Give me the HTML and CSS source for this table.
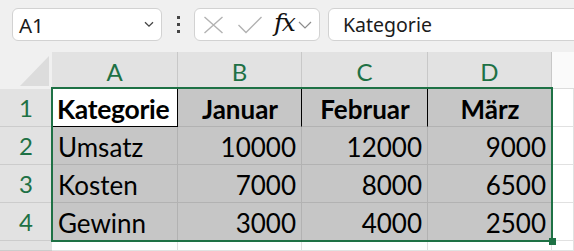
FILE: index.html
```html
<!DOCTYPE html>
<html lang="de">
<head>
    <meta charset="UTF-8">
    <title>Mappe1 - Excel</title>
    <link rel="stylesheet" href="styles.css">
</head>
<body>
    <div class="toolbar">
        <div class="namebox">
            <span>A1</span>
            <svg class="chev" width="10" height="7" viewBox="0 0 10 7"><path d="M1 1.2 L5 5.2 L9 1.2" fill="none" stroke="#444" stroke-width="1.3"/></svg>
        </div>
        <div class="dots"><i></i><i></i><i></i></div>
        <div class="funcbox">
            <svg class="icon" width="22" height="18" viewBox="0 0 22 18"><path d="M1.5 1 L19.5 17 M19.5 1 L1.5 17" stroke="#b2b2b2" stroke-width="1.4" fill="none"/></svg>
            <svg class="icon" width="26" height="18" viewBox="0 0 26 18"><path d="M1.5 9 L9 16.5 L24.5 1" stroke="#b2b2b2" stroke-width="1.4" fill="none"/></svg>
            <span class="fx">fx</span>
            <svg class="chev small" width="14" height="8" viewBox="0 0 14 8"><path d="M1 1 L7 7 L13 1" fill="none" stroke="#8c8c8c" stroke-width="1.2"/></svg>
        </div>
        <div class="formula">Kategorie</div>
    </div>

    <div class="sheet">
        <!-- column headers -->
        <div class="corner"><div class="tri"></div></div>
        <div class="hd">A</div>
        <div class="hd">B</div>
        <div class="hd">C</div>
        <div class="hd">D</div>
        <div class="hd empty"></div>

        <div class="rh">1</div>
        <div class="c act">Kategorie</div>
        <div class="c sel b-mid thick">Januar</div>
        <div class="c sel b-mid thick">Februar</div>
        <div class="c sel b-mid">März</div>
        <div class="c"></div>

        <div class="rh">2</div>
        <div class="c sel">Umsatz</div>
        <div class="c sel num">10000</div>
        <div class="c sel num">12000</div>
        <div class="c sel num">9000</div>
        <div class="c"></div>

        <div class="rh">3</div>
        <div class="c sel">Kosten</div>
        <div class="c sel num">7000</div>
        <div class="c sel num">8000</div>
        <div class="c sel num">6500</div>
        <div class="c"></div>

        <div class="rh">4</div>
        <div class="c sel">Gewinn</div>
        <div class="c sel num">3000</div>
        <div class="c sel num">4000</div>
        <div class="c sel num">2500</div>
        <div class="c"></div>

        <div class="rh"></div>
        <div class="c"></div>
        <div class="c"></div>
        <div class="c"></div>
        <div class="c"></div>
        <div class="c"></div>

        <!-- selected range A1:D4 -->
        <div class="selection"></div>
        <div class="handle"></div>
    </div>
</body>
</html>
```

FILE: styles.css
```css
body {
    margin: 0;
    width: 574px;
    height: 251px;
    overflow: hidden;
    background: #ffffff;
    font-family: 'Lato', sans-serif;
}

/* Name box + formula bar */
.toolbar {
    height: 52px;
    box-sizing: border-box;
    padding: 8px 0 0 12px;
    background: #f0f0f0;
    display: flex;
    align-items: flex-start;
    overflow: hidden;
    font-family: 'Noto Sans', sans-serif;
}

.toolbar > * {
    flex-shrink: 0;
}

.namebox,
.funcbox,
.formula {
    height: 33px;
    box-sizing: border-box;
    background: #ffffff;
    border: 1px solid #d2d2d2;
    border-radius: 6px;
    display: flex;
    align-items: center;
}

.namebox {
    width: 150px;
    padding: 0 7px 0 6px;
    justify-content: space-between;
    font-size: 20.5px;
    color: #1b1b1b;
}

.dots {
    width: 32px;
    display: flex;
    flex-direction: column;
    align-items: center;
    gap: 4px;
    padding-top: 8px;
}

.dots i {
    width: 3px;
    height: 3px;
    background: #444;
}

.funcbox {
    width: 126px;
    padding-left: 8px;
}

.funcbox .icon {
    margin-right: 12px;
}

.fx {
    font-family: 'DejaVu Serif', serif;
    font-style: italic;
    font-size: 25px;
    color: #111;
    margin: -4px 4px 0 -1px;
    letter-spacing: -1.5px;
}

.formula {
    width: 260px;
    margin-left: 8px;
    padding-left: 14px;
    font-size: 19.5px;
    color: #1b1b1b;
    border-radius: 6px 0 0 6px;
}

/* Grid */
.sheet {
    position: relative;
    display: grid;
    grid-template-columns: 52px 126px 124px 126px 124px 1fr;
    grid-template-rows: 37px 38px 38px 38px 38px 1fr;
    height: 199px;
}

.sheet > div {
    box-sizing: border-box;
}

.corner {
    background: #f0f0f0;
    position: relative;
}

.corner .tri {
    position: absolute;
    left: 20px;
    top: 4px;
    width: 0;
    height: 0;
    border-left: 29px solid transparent;
    border-bottom: 30px solid #dcdcdc;
}

.hd {
    background: #e2e2e2;
    border-right: 1px solid #c8c8c8;
    color: #1e7145;
    font-size: 24px;
    display: flex;
    align-items: center;
    justify-content: center;
    padding-top: 2px;
}

.hd.empty {
    background: #fafafa;
    border-right: none;
    border-bottom: 1px solid #dcdcdc;
}

.rh {
    background: #e2e2e2;
    border-bottom: 1px solid #cccccc;
    color: #1e7145;
    font-size: 24px;
    display: flex;
    align-items: center;
    justify-content: center;
}

.c {
    border-right: 1px solid #e1e1e1;
    border-bottom: 1px solid #e1e1e1;
    font-size: 26px;
    color: #000;
    display: flex;
    align-items: center;
    padding: 2px 5px 0 6px;
    white-space: nowrap;
}

.c.sel {
    background: #c6c6c6;
    border-color: #b2b2b2;
}

.c.num {
    justify-content: flex-end;
}

/* header row of the table */
.c.act {
    background: #ffffff;
    font-weight: bold;
    font-size: 26.5px;
    padding-left: 5px;
    letter-spacing: -0.3px;
    border-right: 1px solid #000;
    border-bottom: 1px solid #000;
}

.c.b-mid {
    font-weight: bold;
    justify-content: center;
}

.c.thick {
    border-right-color: #000;
}

.selection {
    position: absolute;
    left: 51px;
    top: 35px;
    width: 502px;
    height: 155px;
    border: 2px solid #1e7145;
    pointer-events: none;
}

.handle {
    position: absolute;
    left: 549px;
    top: 186px;
    width: 7px;
    height: 7px;
    background: #1e7145;
}
```
